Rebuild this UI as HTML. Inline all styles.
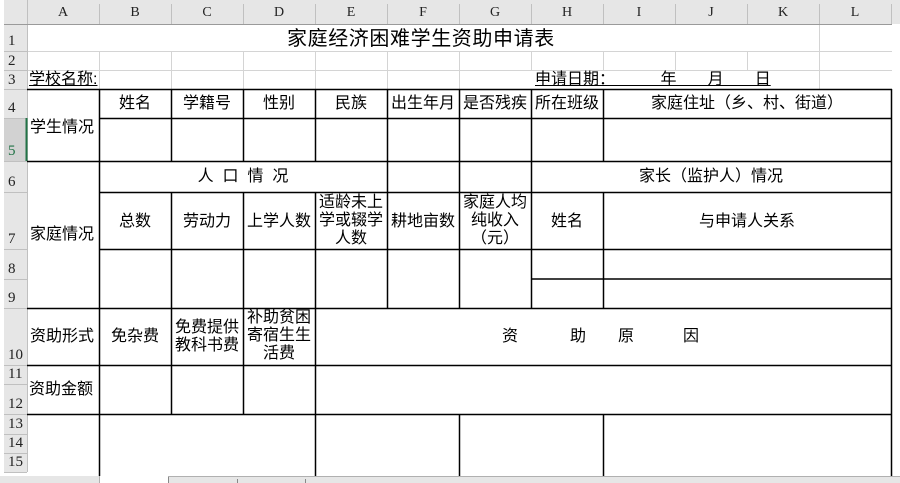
<!DOCTYPE html>
<html><head><meta charset="utf-8"><style>
body{margin:0;width:900px;height:483px;overflow:hidden;background:#fff;position:relative;font-family:"Liberation Sans","Noto Sans CJK SC","WenQuanYi Zen Hei",sans-serif;}
.a{position:absolute;}
.t{position:absolute;font-size:16px;line-height:18px;color:#000;text-align:center;white-space:nowrap;}
.ch{position:absolute;top:0;height:24px;line-height:26px;font-family:"Liberation Serif","DejaVu Serif",serif;font-size:14px;text-align:center;color:#222;}
.rh{position:absolute;left:4px;width:22px;font-family:"Liberation Serif","DejaVu Serif",serif;font-size:15px;color:#222;padding-left:4px;box-sizing:border-box;}
.u{text-decoration:underline;}
</style></head><body>
<svg class="a" style="left:0;top:0" width="900" height="483">
<rect x="4" y="0" width="896" height="24" fill="#e6e6e6"/>
<rect x="4" y="0" width="23" height="472" fill="#e6e6e6"/>
<rect x="4" y="118" width="23" height="43" fill="#d2d2d2"/>
<g stroke="#d4d4d4" stroke-width="1">
<line x1="27" y1="51.5" x2="892" y2="51.5"/><line x1="27" y1="70.5" x2="892" y2="70.5"/><line x1="27" y1="89.5" x2="892" y2="89.5"/>
<line x1="99.5" y1="51" x2="99.5" y2="89"/><line x1="171.5" y1="51" x2="171.5" y2="89"/><line x1="243.5" y1="51" x2="243.5" y2="89"/><line x1="315.5" y1="51" x2="315.5" y2="89"/><line x1="387.5" y1="51" x2="387.5" y2="89"/><line x1="459.5" y1="51" x2="459.5" y2="89"/><line x1="531.5" y1="51" x2="531.5" y2="70"/><line x1="603.5" y1="51" x2="603.5" y2="70"/><line x1="675.5" y1="51" x2="675.5" y2="70"/><line x1="747.5" y1="51" x2="747.5" y2="70"/><line x1="819.5" y1="25" x2="819.5" y2="89"/>
</g>
<g stroke="#c0c0c0" stroke-width="1">
<line x1="27.5" y1="0" x2="27.5" y2="24"/><line x1="99.5" y1="4" x2="99.5" y2="24"/><line x1="171.5" y1="4" x2="171.5" y2="24"/><line x1="243.5" y1="4" x2="243.5" y2="24"/><line x1="315.5" y1="4" x2="315.5" y2="24"/><line x1="387.5" y1="4" x2="387.5" y2="24"/><line x1="459.5" y1="4" x2="459.5" y2="24"/><line x1="531.5" y1="4" x2="531.5" y2="24"/><line x1="603.5" y1="4" x2="603.5" y2="24"/><line x1="675.5" y1="4" x2="675.5" y2="24"/><line x1="747.5" y1="4" x2="747.5" y2="24"/><line x1="819.5" y1="4" x2="819.5" y2="24"/><line x1="891.5" y1="4" x2="891.5" y2="24"/>
<line x1="4" y1="51.5" x2="27" y2="51.5"/><line x1="4" y1="70.5" x2="27" y2="70.5"/><line x1="4" y1="89.5" x2="27" y2="89.5"/><line x1="4" y1="118.5" x2="27" y2="118.5"/><line x1="4" y1="161.5" x2="27" y2="161.5"/><line x1="4" y1="192.5" x2="27" y2="192.5"/><line x1="4" y1="249.5" x2="27" y2="249.5"/><line x1="4" y1="279.5" x2="27" y2="279.5"/><line x1="4" y1="308.5" x2="27" y2="308.5"/><line x1="4" y1="365.5" x2="27" y2="365.5"/><line x1="4" y1="384.5" x2="27" y2="384.5"/><line x1="4" y1="414.5" x2="27" y2="414.5"/><line x1="4" y1="434.5" x2="27" y2="434.5"/><line x1="4" y1="453.5" x2="27" y2="453.5"/><line x1="4" y1="472.5" x2="27" y2="472.5"/>
<line x1="27.5" y1="24" x2="27.5" y2="472"/>
</g>
<line x1="4" y1="24.5" x2="892" y2="24.5" stroke="#9a9a9a"/>
<line x1="26.5" y1="118" x2="26.5" y2="161" stroke="#217346" stroke-width="2"/>
<g stroke="#000" stroke-width="1.5">
<line x1="27" y1="89.5" x2="892" y2="89.5"/><line x1="99" y1="118.5" x2="892" y2="118.5"/><line x1="27" y1="161.5" x2="892" y2="161.5"/><line x1="99" y1="192.5" x2="892" y2="192.5"/><line x1="99" y1="249.5" x2="892" y2="249.5"/><line x1="531" y1="279" x2="892" y2="279"/><line x1="27" y1="308.5" x2="892" y2="308.5"/><line x1="27" y1="365.5" x2="892" y2="365.5"/><line x1="27" y1="414.5" x2="892" y2="414.5"/>
<line x1="99.5" y1="89" x2="99.5" y2="476"/>
<line x1="171.5" y1="89" x2="171.5" y2="161"/><line x1="171.5" y1="192" x2="171.5" y2="414"/>
<line x1="243.5" y1="89" x2="243.5" y2="161"/><line x1="243.5" y1="192" x2="243.5" y2="414"/>
<line x1="315.5" y1="89" x2="315.5" y2="161"/><line x1="315.5" y1="192" x2="315.5" y2="476"/>
<line x1="387.5" y1="89" x2="387.5" y2="308"/>
<line x1="459.5" y1="89" x2="459.5" y2="308"/><line x1="459.5" y1="414" x2="459.5" y2="476"/>
<line x1="531.5" y1="89" x2="531.5" y2="308"/>
<line x1="603.5" y1="89" x2="603.5" y2="161"/><line x1="603.5" y1="192" x2="603.5" y2="308"/><line x1="603.5" y1="414" x2="603.5" y2="476"/>
<line x1="891.5" y1="89" x2="891.5" y2="476"/>
</g>
<rect x="0" y="476" width="900" height="7" fill="#e6e6e6"/>
<rect x="100" y="476" width="68" height="7" fill="#fff"/>
<line x1="99.5" y1="476" x2="99.5" y2="483" stroke="#b0b0b0"/><line x1="168.5" y1="477" x2="168.5" y2="483" stroke="#888"/><line x1="168" y1="476.5" x2="900" y2="476.5" stroke="#b0b0b0"/><line x1="237.5" y1="479" x2="237.5" y2="483" stroke="#888"/><line x1="305.5" y1="479" x2="305.5" y2="483" stroke="#888"/>
</svg>
<div class="ch" style="left:27px;width:72px">A</div><div class="ch" style="left:99px;width:72px">B</div><div class="ch" style="left:171px;width:72px">C</div><div class="ch" style="left:243px;width:72px">D</div><div class="ch" style="left:315px;width:72px">E</div><div class="ch" style="left:387px;width:72px">F</div><div class="ch" style="left:459px;width:72px">G</div><div class="ch" style="left:531px;width:72px">H</div><div class="ch" style="left:603px;width:72px">I</div><div class="ch" style="left:675px;width:72px">J</div><div class="ch" style="left:747px;width:72px">K</div><div class="ch" style="left:819px;width:72px">L</div>
<div class="rh" style="top:33px">1</div><div class="rh" style="top:53px">2</div><div class="rh" style="top:72px">3</div><div class="rh" style="top:100px">4</div><div class="rh" style="top:143px;color:#217346">5</div><div class="rh" style="top:174px">6</div><div class="rh" style="top:231px">7</div><div class="rh" style="top:261px">8</div><div class="rh" style="top:290px">9</div><div class="rh" style="top:347px">10</div><div class="rh" style="top:366px">11</div><div class="rh" style="top:396px">12</div><div class="rh" style="top:416px">13</div><div class="rh" style="top:435px">14</div><div class="rh" style="top:454px">15</div>
<div class="t" style="left:287px;top:27px;font-size:20px;line-height:24px;letter-spacing:0.6px">家庭经济困难学生资助申请表</div>
<div class="t u" style="left:29px;top:71px">学校名称:</div>
<div class="t u" style="left:535px;top:71px;white-space:pre">申请日期：                </div>
<div class="t u" style="left:616px;top:71px;white-space:pre">          年       月       日</div>
<div class="t" style="left:99px;width:72px;top:95px">姓名</div><div class="t" style="left:171px;width:72px;top:95px">学籍号</div><div class="t" style="left:243px;width:72px;top:95px">性别</div><div class="t" style="left:315px;width:72px;top:95px">民族</div><div class="t" style="left:387px;width:72px;top:95px">出生年月</div><div class="t" style="left:459px;width:72px;top:95px">是否残疾</div><div class="t" style="left:531px;width:72px;top:95px">所在班级</div><div class="t" style="left:603px;width:288px;top:95px">家庭住址（乡、村、街道）</div>
<div class="t" style="left:30px;top:119px">学生情况</div>
<div class="t" style="left:99px;width:288px;top:168px;white-space:pre">人  口  情  况</div>
<div class="t" style="left:531px;width:360px;top:168px">家长（监护人）情况</div>
<div class="t" style="left:30px;top:226px">家庭情况</div>
<div class="t" style="left:99px;width:72px;top:213px">总数</div><div class="t" style="left:171px;width:72px;top:213px">劳动力</div><div class="t" style="left:243px;width:72px;top:213px">上学人数</div>
<div class="t" style="left:315px;width:72px;top:194px;white-space:normal">适龄未上<br>学或辍学<br>人数</div>
<div class="t" style="left:387px;width:72px;top:213px">耕地亩数</div>
<div class="t" style="left:459px;width:72px;top:194px;white-space:normal">家庭人均<br>纯收入<br>（元）</div>
<div class="t" style="left:531px;width:72px;top:213px">姓名</div><div class="t" style="left:603px;width:288px;top:213px">与申请人关系</div>
<div class="t" style="left:30px;top:328px">资助形式</div>
<div class="t" style="left:99px;width:72px;top:328px">免杂费</div>
<div class="t" style="left:171px;width:72px;top:319px">免费提供<br>教科书费</div>
<div class="t" style="left:243px;width:72px;top:309px">补助贫困<br>寄宿生生<br>活费</div>
<div class="t" style="left:502px;top:328px">资</div><div class="t" style="left:570px;top:328px">助</div><div class="t" style="left:618px;top:328px">原</div><div class="t" style="left:683px;top:328px">因</div>
<div class="t" style="left:29px;top:381px">资助金额</div>
</body></html>
